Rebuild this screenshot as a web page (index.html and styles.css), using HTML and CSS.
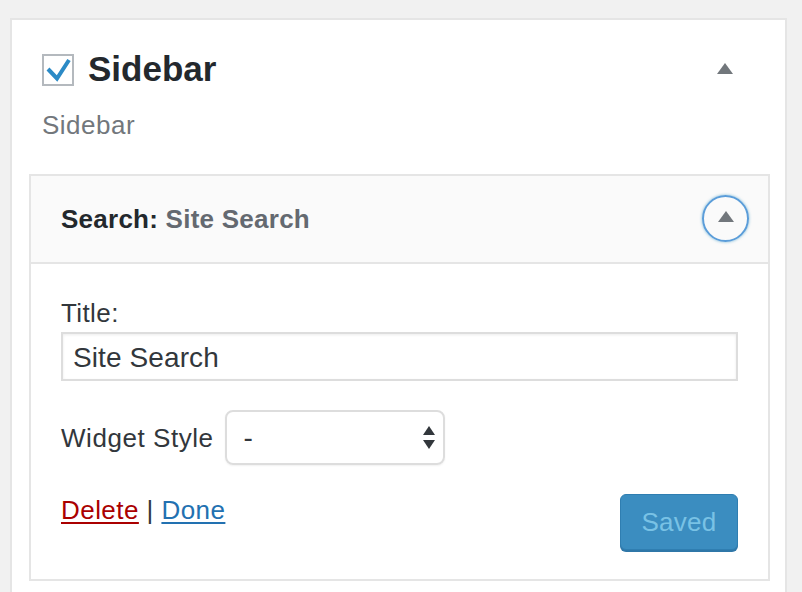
FILE: index.html
```html
<!DOCTYPE html>
<html>
<head>
<meta charset="utf-8">
<link rel="stylesheet" href="styles.css">
</head>
<body>
<div class="panel">
  <div class="panel-head">
    <span class="check">
      <svg width="28" height="28" viewBox="0 0 28 28"><polyline points="4,13 13,22.5 25,4" fill="none" stroke="#2b8ac6" stroke-width="4"/></svg>
    </span>
    <h2 class="panel-title">Sidebar</h2>
    <span class="arrow-up head-arrow"></span>
  </div>
  <p class="panel-sub">Sidebar</p>
  <div class="widget">
    <div class="widget-top">
      <h3 class="widget-title">Search: <span class="in-title">Site Search</span></h3>
      <span class="toggle"><span class="arrow-up"></span></span>
    </div>
    <div class="widget-inside">
      <label class="field-label">Title:</label>
      <div class="text-input">Site Search</div>
      <div class="style-row">
        <span class="style-label">Widget Style</span>
        <div class="select">
          <span class="select-value">-</span>
          <span class="select-arrows"><span class="sa-up"></span><span class="sa-down"></span></span>
        </div>
      </div>
      <div class="actions">
        <div class="links"><a class="delete">Delete</a> | <a class="done">Done</a></div>
        <span class="saved">Saved</span>
      </div>
    </div>
  </div>
</div>
</body>
</html>
```
FILE: styles.css
```css
* { box-sizing: border-box; }
html, body { margin: 0; padding: 0; }
body {
  background: #f1f1f1;
  font-family: "Liberation Sans", Arial, sans-serif;
  color: #32373c;
  width: 802px;
  height: 592px;
  overflow: hidden;
}
.panel {
  margin: 18px 0 0 10px;
  width: 777px;
  background: #fff;
  border: 2px solid #e5e5e5;
  padding: 34px 15px 40px 17px;
}
.panel-head {
  display: flex;
  align-items: center;
  height: 32px;
  margin-left: 13px;
}
.check {
  width: 32px;
  height: 32px;
  border: 2px solid #b4b9be;
  background: #fff;
  display: flex;
  align-items: center;
  justify-content: center;
  flex: none;
}
.panel-title {
  margin: -2px 0 0 14px;
  font-size: 35px;
  line-height: 32px;
  font-weight: bold;
  color: #23282d;
}
.arrow-up {
  display: block;
  width: 0;
  height: 0;
  border-left: 8px solid transparent;
  border-right: 8px solid transparent;
  border-bottom: 11px solid #72777c;
}
.head-arrow {
  margin-left: auto;
  margin-right: 37px;
  margin-bottom: 4px;
}
.panel-sub {
  margin: 24px 0 0 13px;
  font-size: 26px;
  line-height: 30px;
  letter-spacing: 0.5px;
  color: #72777c;
}
.widget {
  margin-top: 34px;
  border: 2px solid #e5e5e5;
  background: #fff;
}
.widget-top {
  height: 88px;
  background: #fafafa;
  border-bottom: 2px solid #e5e5e5;
  display: flex;
  align-items: center;
  padding: 0 19px 0 30px;
}
.widget-title {
  margin: 0;
  font-size: 26px;
  line-height: 30px;
  letter-spacing: 0.25px;
  font-weight: bold;
  color: #23282d;
}
.in-title { color: #646970; }
.toggle {
  margin-left: auto;
  margin-top: -2px;
  width: 47px;
  height: 47px;
  border-radius: 50%;
  border: 2px solid #5b9dd9;
  box-shadow: 0 0 3px rgba(30, 140, 190, 0.6);
  display: flex;
  align-items: center;
  justify-content: center;
}
.toggle .arrow-up { margin-bottom: 3px; }
.widget-inside {
  padding: 34px 30px 29px 30px;
}
.field-label {
  display: block;
  font-size: 26px;
  line-height: 30px;
  letter-spacing: 0.4px;
  color: #32373c;
  margin-bottom: 4px;
}
.text-input {
  height: 49px;
  border: 2px solid #ddd;
  box-shadow: inset 0 1px 3px rgba(0, 0, 0, 0.08);
  padding: 2px 10px 0;
  font-size: 28px;
  line-height: 44px;
  letter-spacing: 0.1px;
  color: #32373c;
}
.style-row {
  margin-top: 29px;
  display: flex;
  align-items: center;
}
.style-label {
  font-size: 26px;
  line-height: 30px;
  letter-spacing: 0.55px;
  margin-right: 11px;
}
.select {
  width: 220px;
  height: 55px;
  border: 2px solid #ddd;
  border-radius: 8px;
  box-shadow: 0 1px 2px rgba(0, 0, 0, 0.06);
  display: flex;
  align-items: center;
  padding: 0 8px 0 17px;
}
.select-value {
  font-size: 28px;
  line-height: 30px;
  color: #32373c;
}
.select-arrows {
  margin-left: auto;
  display: flex;
  flex-direction: column;
  gap: 5px;
}
.sa-up, .sa-down {
  width: 0;
  height: 0;
  border-left: 6.5px solid transparent;
  border-right: 6.5px solid transparent;
}
.sa-up { border-bottom: 9px solid #32373c; }
.sa-down { border-top: 9px solid #32373c; }
.actions {
  margin-top: 29px;
  display: flex;
  justify-content: space-between;
  align-items: flex-start;
}
.links {
  margin-top: 1px;
  font-size: 26px;
  line-height: 30px;
  letter-spacing: 0.45px;
  color: #32373c;
}
.links a { text-decoration: underline; text-underline-offset: 3px; }
.delete { color: #a00; }
.done { color: #2271b1; }
.saved {
  width: 118px;
  height: 56px;
  border-radius: 6px;
  background: #3b8dc0;
  border: 1px solid #2f7eb1;
  box-shadow: 0 2px 0 #2f77a8;
  color: #79c2e5;
  font-size: 26px;
  letter-spacing: 0.3px;
  display: flex;
  align-items: center;
  justify-content: center;
}
```
